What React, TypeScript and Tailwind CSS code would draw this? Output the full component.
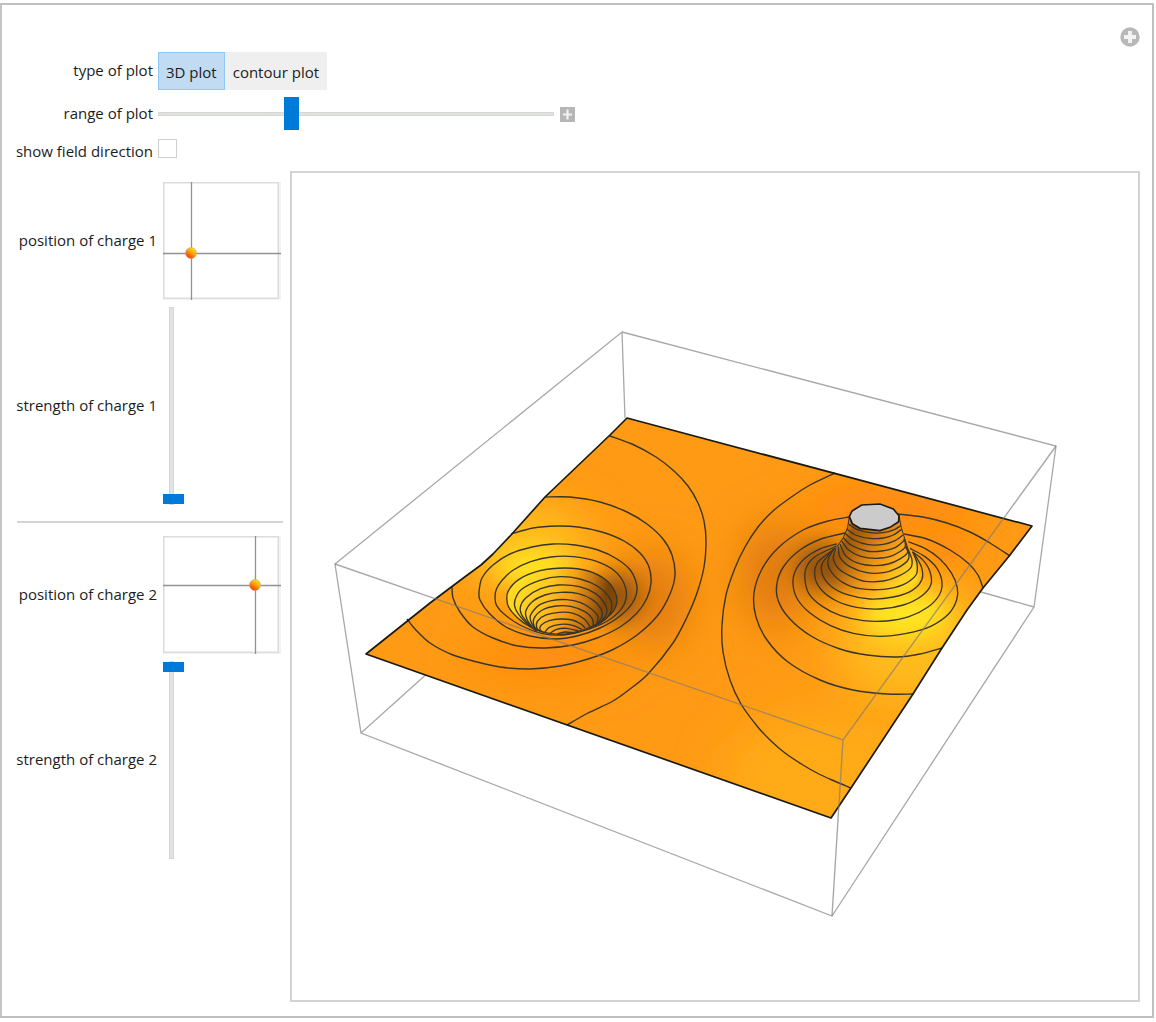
import { useState } from 'react';

type Point = [number, number];

// Convierte "x,y x,y ..." en una curva suave que pasa por todos los puntos
const smooth = (list: string, closed = false) => {
  const pts = list.split(' ').map((p) => p.split(',').map(Number) as Point);
  const n = pts.length;
  const at = (i: number) => (closed ? pts[(i + n) % n] : pts[Math.max(0, Math.min(n - 1, i))]);
  let d = `M${pts[0][0]} ${pts[0][1]}`;
  for (let i = 0; i < (closed ? n : n - 1); i++) {
    const [a, b, c, e] = [at(i - 1), at(i), at(i + 1), at(i + 2)];
    d += `C${b[0] + (c[0] - a[0]) / 7} ${b[1] + (c[1] - a[1]) / 7} ${c[0] - (e[0] - b[0]) / 7} ${c[1] - (e[1] - b[1]) / 7} ${c[0]} ${c[1]}`;
  }
  return closed ? d + 'Z' : d;
};

const surface =
  'M627 418L1032 526L1010 555L983 588L967 610L942 648L913 694L851 788L831 818L366 654L430 603L466 576L481 565L493 554L511 535L545 497L610 435Z';

// Equipotential lines far from the charges
const outerLines = [
  '610,436 632,444 656,457 674,471 688,486 698,503 704,521 706,541 704,567 697,593 687,617 673,643 648,674 630,689 613,701 588,713 567,725',
  '545,497 570,497 600,502 627,512 647,524 663,539 672,555 675,575 670,594 658,615 637,635 612,650 588,659 560,666 530,669 500,667 477,662 453,655 430,643 415,629 407,619',
  '511,534 533,528 557,526 578,527 602,532 624,541 640,553 649,567 651,583 647,598 637,613 620,627 597,638 573,645 545,648 518,646 493,638 473,627 460,612 453,598 452,586',
  '835,473 810,485 790,498 773,511 758,527 745,547 735,568 726,595 722,625 723,652 730,680 741,704 757,726 770,740 785,753 803,765 817,773 832,780 851,788',
  '1010,556 990,543 970,532 947,523 923,517 898,514',
  '849,517 828,521 803,530 778,548 762,569 754,593 756,617 767,640 788,662 820,680 853,690 887,694 913,694',
  '983,588 978,575 968,563 950,550 927,539 904,534',
  '845,533 821,539 800,550 784,566 777,583 778,600 789,618 811,636 840,649 867,655 897,657 920,654 942,648',
];

const wellRim =
  '479,592 482,578 493,565 510,554 532,547 553,544 575,545 598,550 617,559 631,571 637,587 633,602 620,616 600,628 577,636 555,639 530,636 506,627 489,613 480,600';

// Rings of the well and of the peak are drawn on a grid three times finer
const wellClosed = [
  '75,235 79,208 97,180 130,150 182,125 243,111 310,110 382,125 434,153 462,190 469,230 453,268 412,303 350,330 280,345 215,340 150,315 103,283 80,257',
  '112,250 114,215 147,178 210,152 286,144 355,153 408,180 435,215 440,250 422,283 380,313 325,334 270,343 212,334 160,308 125,275',
];

const wellOpen = [
  '200,335 160,300 137,268 135,240 156,207 210,181 270,170 330,177 382,198 415,228 426,255 418,284 393,308 350,328',
  '185,322 157,288 151,262 168,233 212,206 265,195 328,200 377,221 404,250 410,280 385,315',
  '190,325 172,300 167,275 187,245 225,225 272,217 325,221 367,239 392,265 396,290 375,320',
  '200,332 185,310 181,287 205,257 245,242 290,239 332,248 367,269 384,290 380,312',
  '205,333 192,318 192,295 217,270 258,258 302,259 345,275 367,296 370,318',
  '212,336 200,322 203,303 228,285 268,277 310,280 343,297 360,320',
  '220,338 210,328 214,315 238,302 270,297 307,300 333,312 345,324',
  '225,337 238,322 272,313 308,316 335,328',
  '240,340 260,328 290,325 325,333',
  '262,341 285,336 310,338',
];

const peakRings = [
  '170,147 122,161 75,190 46,228 39,268 52,312 90,354 150,391 220,415 300,424 380,415 452,394 505,358 530,315 532,278 515,235 480,192 435,160 385,140',
  '170,153 108,183 80,215 75,255 88,298 128,335 182,362 250,377 320,378 385,366 443,337 478,300 486,262 471,220 435,185 390,160',
  '165,160 115,200 104,240 122,282 170,318 230,337 300,342 370,330 425,303 453,268 449,227 427,193 397,170',
  '160,162 127,205 128,240 155,275 205,300 270,312 340,306 397,286 426,253 424,215 400,172',
  '162,162 144,195 152,228 188,262 240,281 310,283 370,269 408,240 411,205 398,170',
  '168,158 160,190 177,222 215,245 255,259 310,258 352,245 391,220 396,195 385,165',
  '175,155 180,187 210,215 260,233 310,233 350,220 382,198 387,178 377,155',
  '180,147 197,182 232,204 280,212 325,207 363,190 383,172 376,150',
  '185,138 206,165 242,184 290,190 335,183 375,157 372,130',
  '190,128 213,150 260,168 305,168 345,158 373,136',
  '195,115 221,135 265,149 310,148 345,137 369,120',
  '200,102 226,120 270,130 310,129 340,120 366,102',
  '207,88 231,103 270,113 310,113 343,104 362,92',
];

const peakCap = 'M208 65L216 48L245 30L300 27L340 42L357 62L356 80L330 97L300 107L240 100L217 86Z';
const peakBody =
  'M213 65L208 98L195 128L180 156L152 180L135 205L136 240L160 270L205 292L270 304L340 299L395 280L418 255L415 215L395 178L376 162L369 130L360 98L352 62Z';

const PotentialPlot = () => (
  <svg viewBox="292 173 846 827" className="block h-auto w-full" role="img" aria-label="3D plot of the potential">
    <defs>
      <clipPath id="surfaceClip">
        <path d={surface} />
      </clipPath>
      <clipPath id="wellClip">
        <path d={smooth(wellClosed[1], true)} />
      </clipPath>
      <filter id="blurWide" filterUnits="userSpaceOnUse" x="292" y="373" width="846" height="500">
        <feGaussianBlur stdDeviation="22" />
      </filter>
      <filter id="blurMid" filterUnits="userSpaceOnUse" x="292" y="373" width="846" height="500">
        <feGaussianBlur stdDeviation="12" />
      </filter>
      <filter id="blurSmall" x="-20%" y="-20%" width="140%" height="140%">
        <feGaussianBlur stdDeviation="7" />
      </filter>
      <linearGradient id="wellShade" gradientUnits="userSpaceOnUse" x1="150" y1="200" x2="430" y2="275">
        <stop offset="0" stopColor="#ffe326" />
        <stop offset="0.3" stopColor="#fdc722" />
        <stop offset="0.52" stopColor="#f29d1b" />
        <stop offset="0.72" stopColor="#b56a12" />
        <stop offset="0.88" stopColor="#6f3d05" />
        <stop offset="1" stopColor="#7a4508" />
      </linearGradient>
      <linearGradient id="peakShade" gradientUnits="userSpaceOnUse" x1="140" y1="170" x2="360" y2="330">
        <stop offset="0" stopColor="#7b4306" />
        <stop offset="0.2" stopColor="#a05b0d" />
        <stop offset="0.42" stopColor="#dd8617" />
        <stop offset="0.62" stopColor="#f9a81e" />
        <stop offset="0.85" stopColor="#ffd923" />
        <stop offset="1" stopColor="#ffe423" />
      </linearGradient>
    </defs>

    {/* Far edges of the bounding box */}
    <path
      d="M625 418L622 332L335 564L361 733L832 916L1034 607L1056 446L622 332M361 733L440 662M1034 607L960 586"
      fill="none"
      stroke="#a8a8a8"
      strokeWidth="1.3"
    />

    <g clipPath="url(#surfaceClip)">
      <path d={surface} fill="#ff9a15" />
      <g filter="url(#blurWide)">
        <ellipse cx="525" cy="545" rx="66" ry="42" fill="#ffbe1e" />
        <ellipse cx="545" cy="660" rx="80" ry="16" fill="#ff8710" />
        <ellipse cx="655" cy="600" rx="34" ry="48" fill="#e27b10" />
        <ellipse cx="775" cy="575" rx="32" ry="52" fill="#dd7810" />
        <ellipse cx="890" cy="508" rx="95" ry="20" fill="#ff8610" />
        <ellipse cx="915" cy="645" rx="80" ry="58" fill="#ffbc1d" />
        <ellipse cx="830" cy="780" rx="110" ry="70" fill="#ffaa18" />
      </g>
      <g filter="url(#blurMid)">
        <ellipse cx="535" cy="568" rx="38" ry="18" fill="#ffe623" />
        <ellipse cx="618" cy="597" rx="22" ry="24" fill="#8d500a" />
        <ellipse cx="822" cy="567" rx="26" ry="24" fill="#8a4e09" />
        <ellipse cx="906" cy="614" rx="44" ry="24" fill="#ffe623" />
        <ellipse cx="945" cy="548" rx="26" ry="16" fill="#ff8c11" />
      </g>
      <g transform="translate(470 520) scale(0.3333)">
        <g clipPath="url(#wellClip)">
          <rect x="60" y="120" width="420" height="240" fill="url(#wellShade)" opacity="0.8" />
        </g>
      </g>
    </g>

    <g fill="none" stroke="#3a3528" strokeWidth="1.4">
      {outerLines.map((line) => (
        <path key={line} d={smooth(line)} />
      ))}
      <path d={smooth(wellRim, true)} />
    </g>

    <g transform="translate(470 520) scale(0.3333)" fill="none" stroke="#3a3528" strokeWidth="4">
      {wellClosed.map((ring) => (
        <path key={ring} d={smooth(ring, true)} />
      ))}
      {wellOpen.map((ring) => (
        <path key={ring} d={smooth(ring)} />
      ))}
    </g>

    <g transform="translate(780 495) scale(0.3333)" fill="none" stroke="#3a3528" strokeWidth="4">
      <path d={peakBody} fill="url(#peakShade)" stroke="none" opacity="0.85" filter="url(#blurSmall)" />
      {peakRings.map((ring) => (
        <path key={ring} d={smooth(ring)} />
      ))}
      <path d="M208 65L203 98L190 128L170 156M357 62L364 98L374 130L385 165" strokeWidth="3" />
      <path d={peakCap} fill="#cbcbcb" stroke="#1c1c1c" strokeWidth="5" />
    </g>

    <path d={surface} fill="none" stroke="#1a1a14" strokeWidth="1.7" strokeLinejoin="round" />

    {/* Near edges of the box, seen over the surface */}
    <path
      d="M335 564L843 740L1056 446M843 740L832 916"
      fill="none"
      stroke="#7b7b7b"
      strokeOpacity="0.65"
      strokeWidth="1.4"
    />
  </svg>
);

interface PositionPadProps {
  label: string;
  x: number;
  y: number;
}

const PositionPad = ({ label, x, y }: PositionPadProps) => (
  <svg viewBox="0 0 118 118" className="h-[118px] w-[118px]" role="img" aria-label={label}>
    <defs>
      <linearGradient id="knob" x1="0.8" y1="0.1" x2="0.25" y2="0.9">
        <stop offset="0" stopColor="#ffe600" />
        <stop offset="0.5" stopColor="#ff9c0a" />
        <stop offset="1" stopColor="#ff3c00" />
      </linearGradient>
    </defs>
    <path d="M117 0V117H0" fill="none" stroke="#f3f3f3" strokeWidth="2" />
    <rect x="0.75" y="0.75" width="114.5" height="115.5" fill="#fff" stroke="#dcdcdc" strokeWidth="1.5" />
    <path d={`M${x + 0.5} 0V118M0 ${y + 0.5}H118`} stroke="#929292" strokeWidth="1.3" />
    <circle cx={x} cy={y} r="5.5" fill="url(#knob)" stroke="#b9a79c" strokeWidth="0.6" />
  </svg>
);

interface StrengthSliderProps {
  id: string;
  initial: number;
}

const StrengthSlider = ({ id, initial }: StrengthSliderProps) => {
  const [value, setValue] = useState(initial);
  return (
    <input
      id={id}
      type="range"
      min={-1}
      max={1}
      step={0.01}
      value={value}
      onChange={(e) => setValue(Number(e.target.value))}
      className="block h-[198px] w-[17px] appearance-none bg-transparent [direction:rtl] [writing-mode:vertical-lr] [&::-webkit-slider-runnable-track]:h-full [&::-webkit-slider-runnable-track]:w-[5px] [&::-webkit-slider-runnable-track]:border [&::-webkit-slider-runnable-track]:border-[#d6d6d6] [&::-webkit-slider-runnable-track]:bg-[#e2e2e2] [&::-webkit-slider-thumb]:-ml-[7px] [&::-webkit-slider-thumb]:h-[10px] [&::-webkit-slider-thumb]:w-[21px] [&::-webkit-slider-thumb]:appearance-none [&::-webkit-slider-thumb]:bg-[#007ad9]"
    />
  );
};

interface ChargeControlsProps {
  n: number;
  x: number;
  y: number;
  strength: number;
}

const ChargeControls = ({ n, x, y, strength }: ChargeControlsProps) => (
  <div className="grid grid-cols-[142px_118px] items-center gap-x-1.5 gap-y-[7px]">
    <span className="pb-0.5 text-right">position of charge {n}</span>
    <PositionPad label={`position of charge ${n}`} x={x} y={y} />
    <label htmlFor={`strength${n}`} className="pb-0.5 text-right">
      strength of charge {n}
    </label>
    <StrengthSlider id={`strength${n}`} initial={strength} />
  </div>
);

export default function App() {
  const [plotType, setPlotType] = useState('3D plot');
  const [range, setRange] = useState(33);
  const [showField, setShowField] = useState(false);

  return (
    <main className="mt-[3px] mr-0.5 border-2 border-[#bfbfc1] border-l-[#c4c4c4] bg-white pr-3 pb-3.5 pl-[13px] font-['Open_Sans',sans-serif] text-[15px] leading-5 text-[#1c1c1c]">
      <header className="flex items-start justify-between pt-[22px]">
        <div className="grid grid-cols-[138px_1fr] items-center gap-x-[5px] pt-[25px]">
          <span className="pb-0.5 text-right">type of plot</span>
          <div className="flex h-[38px]">
            {['3D plot', 'contour plot'].map((name) => (
              <button
                key={name}
                onClick={() => setPlotType(name)}
                className={`border px-[7px] pt-0.5 ${
                  plotType === name ? 'border-[#8fc7f6] bg-[#c0dbf2]' : 'border-[#efefef] bg-[#efefef]'
                }`}
              >
                {name}
              </button>
            ))}
          </div>

          <label htmlFor="range" className="mt-[7px] pb-0.5 text-right">
            range of plot
          </label>
          <div className="mt-[7px] flex items-center gap-1.5">
            <input
              id="range"
              type="range"
              value={range}
              onChange={(e) => setRange(Number(e.target.value))}
              className="h-[34px] w-[396px] appearance-none bg-transparent [&::-webkit-slider-runnable-track]:h-1 [&::-webkit-slider-runnable-track]:border [&::-webkit-slider-runnable-track]:border-[#d6d8d6] [&::-webkit-slider-runnable-track]:bg-[#e1e3e1] [&::-webkit-slider-thumb]:-mt-4 [&::-webkit-slider-thumb]:h-[33px] [&::-webkit-slider-thumb]:w-[15px] [&::-webkit-slider-thumb]:appearance-none [&::-webkit-slider-thumb]:bg-[#007ad9]"
            />
            <button aria-label="show slider controls">
              <svg viewBox="0 0 15 15" className="h-[15px] w-[15px]">
                <rect width="15" height="15" fill="#b6b6b6" />
                <path d="M7.5 2.5V12.5M3 7.5H12" stroke="#f2f2f2" strokeWidth="2.2" />
              </svg>
            </button>
          </div>

          <label htmlFor="field" className="mt-2 text-right">
            show field direction
          </label>
          <div className="mt-2 h-6">
            <input
              id="field"
              type="checkbox"
              checked={showField}
              onChange={(e) => setShowField(e.target.checked)}
              className="block h-[19px] w-[19px] appearance-none border border-[#cfcfcf] bg-white checked:bg-[#007ad9]"
            />
          </div>
        </div>

        <button aria-label="more options">
          <svg viewBox="0 0 20 20" className="h-5 w-5">
            <circle cx="10" cy="10" r="9.7" fill="#b8b8b8" />
            <path d="M8 4H12V8H16V12H12V16H8V12H4V8H8Z" fill="#f3f3f3" />
          </svg>
        </button>
      </header>

      <div className="mt-2 flex items-start gap-[7px]">
        <section className="w-[268px] shrink-0 pt-[11px]">
          <ChargeControls n={1} x={28} y={71} strength={-1} />
          <hr className="mt-4 mb-[13px] ml-0.5 border-t-2 border-[#d4d4d4]" />
          <ChargeControls n={2} x={92} y={49} strength={1} />
        </section>

        <section className="min-w-0 flex-1 border-2 border-[#d3d3d3]">
          <PotentialPlot />
        </section>
      </div>
    </main>
  );
}
